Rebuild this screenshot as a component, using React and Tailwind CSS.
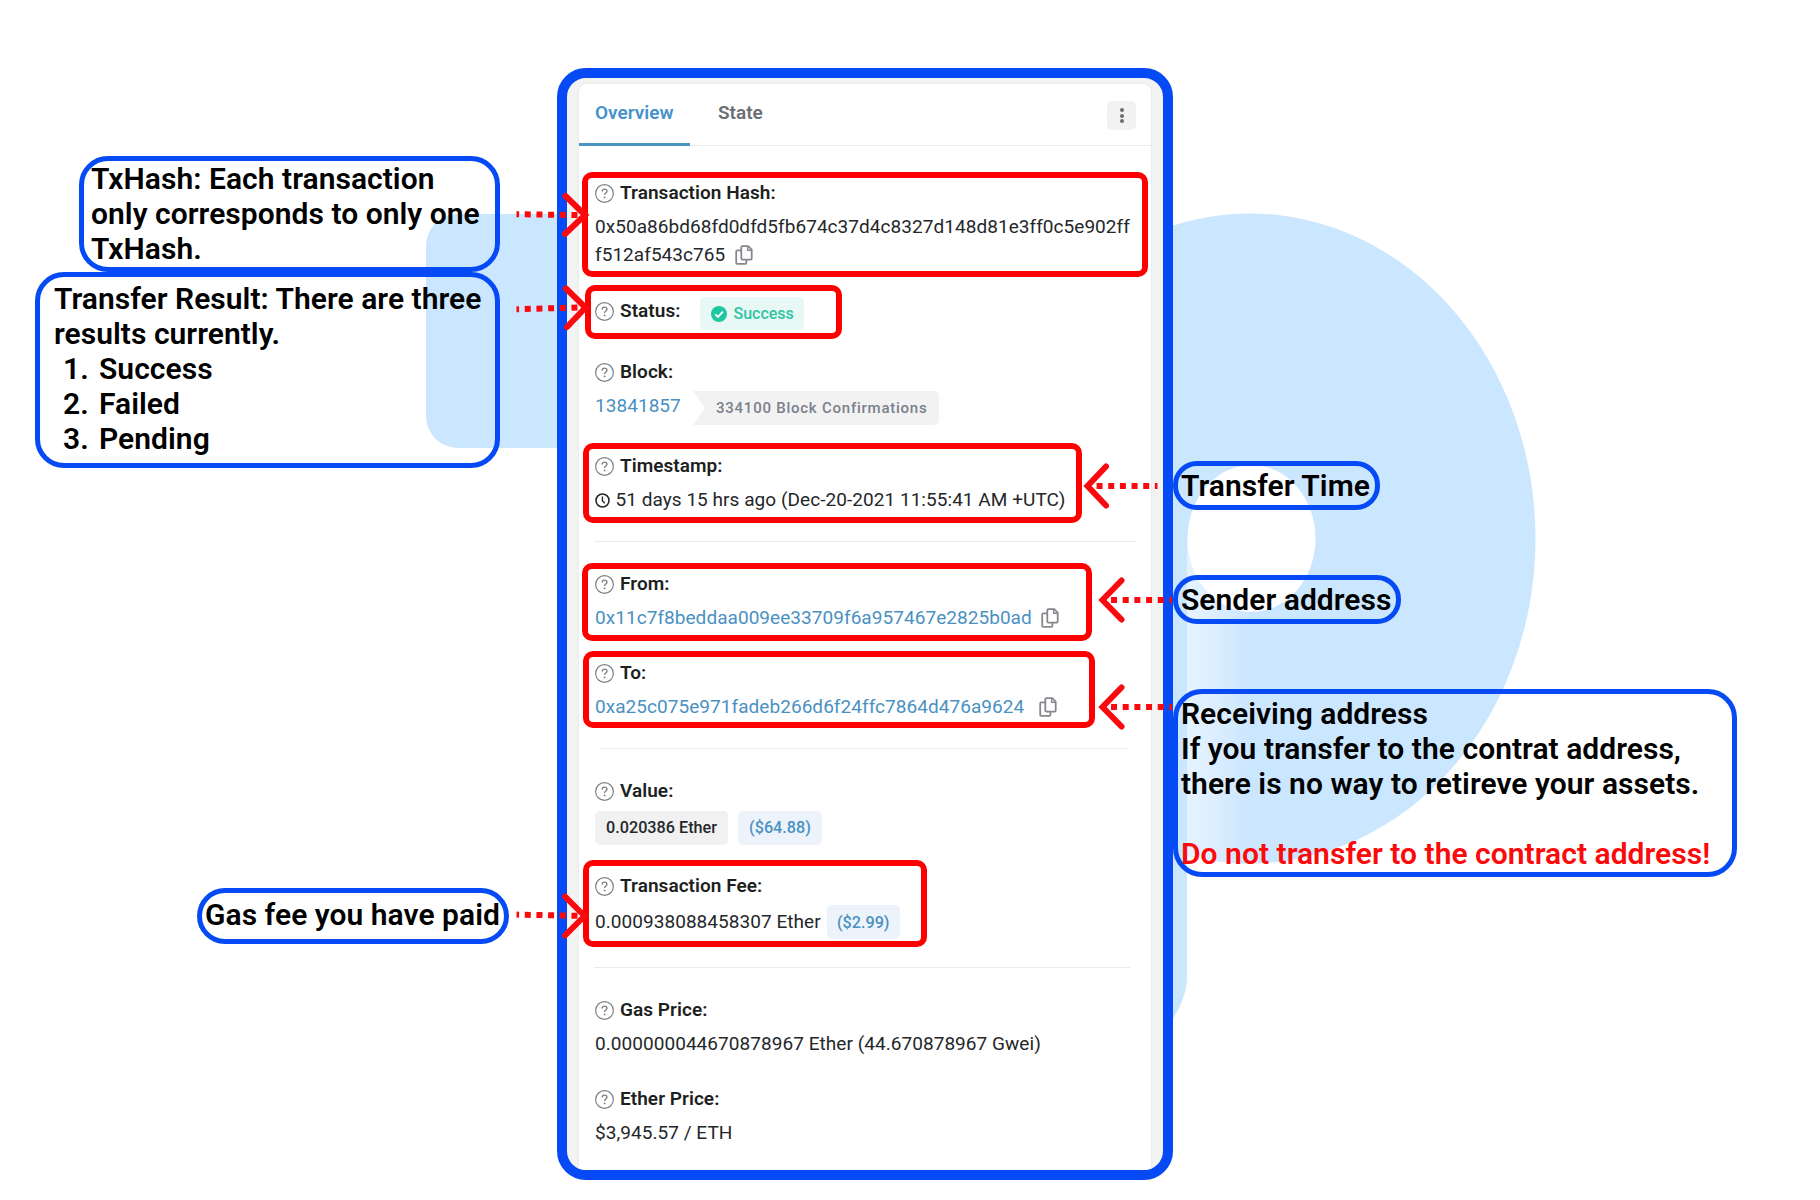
import React from "react";

const HelpIcon = () => (
  <svg viewBox="0 0 18 18" className="h-[19px] w-[19px] shrink-0" fill="none" stroke="#7c7f83">
    <circle cx="9" cy="9" r="8.4" strokeWidth="1.1" />
    <path d="M6.7 7.1c0-1.4 1-2.2 2.3-2.2s2.3.8 2.3 2c0 1.7-2.2 1.7-2.2 3.5" strokeWidth="1.3" />
    <circle cx="9.1" cy="12.7" r="0.9" fill="#7c7f83" stroke="none" />
  </svg>
);

const CopyIcon = ({ className = "" }) => (
  <svg
    viewBox="0 0 18 20"
    className={"h-5 w-[18px] shrink-0 " + className}
    fill="none"
    stroke="#85888c"
    strokeWidth="1.8"
    strokeLinejoin="round"
  >
    <path d="M6.3 2.2a1 1 0 0 1 1-1h6l3.4 3.4v9a1 1 0 0 1-1 1H7.3a1 1 0 0 1-1-1z" />
    <path d="M12.6 1.4v3.8h3.9" strokeWidth="1.4" />
    <path d="M6 5.4H2.2a1 1 0 0 0-1 1v11.4a1 1 0 0 0 1 1h8.2a1 1 0 0 0 1-1v-3" />
  </svg>
);

const ClockIcon = () => (
  <svg viewBox="0 0 15 15" className="h-[15px] w-[15px] shrink-0" fill="none" stroke="#26282b">
    <circle cx="7.5" cy="7.5" r="6.5" strokeWidth="1.6" />
    <path d="M7.4 3.6v4.2l2.3 2.4" strokeWidth="1.4" />
  </svg>
);

const CheckIcon = () => (
  <svg viewBox="0 0 16 16" className="h-4 w-4 shrink-0">
    <circle cx="8" cy="8" r="8" fill="#1fc6a2" />
    <path d="M4.3 8.3l2.7 2.7 4.9-5.3" fill="none" stroke="#fff" strokeWidth="1.9" />
  </svg>
);

function Label({ children, className = "" }) {
  return (
    <div className={"flex h-6 items-center " + className}>
      <HelpIcon />
      <span className="ml-[6px] text-[19px] font-semibold leading-6 tracking-[0.05px] text-[#1d1f21]">{children}</span>
    </div>
  );
}

function Value({ children, className = "" }) {
  return (
    <div className={"flex h-7 items-center text-[19px] leading-7 tracking-[0.05px] " + className}>{children}</div>
  );
}

const Divider = ({ className = "" }) => <div className={"h-px bg-[#ebebec] " + className} />;

const RedBox = ({ className }) => (
  <div className={"pointer-events-none absolute rounded-[10px] border-[6px] border-[#ff0000] " + className} />
);

const Callout = ({ className, children }) => (
  <div
    className={
      "absolute whitespace-nowrap border-[5px] border-[#054af4] text-[30px] font-semibold leading-[35px] tracking-[0.04px] text-black " +
      className
    }
  >
    {children}
  </div>
);

const arrows = [
  { shaft: "M516.5 214.2L583 215.2", head: "M565.5 196L585 215L565 234" },
  { shaft: "M516.5 309.2L583 307.4", head: "M566 288.5L585.5 307.5L567 327" },
  { shaft: "M516.5 914.6L583 915.9", head: "M565 896.5L584.5 916L565 935.5" },
  { shaft: "M1157.5 486L1092 486", head: "M1106 466.5L1087.5 486L1106 505.5" },
  { shaft: "M1172 600L1107 600", head: "M1121.5 580.5L1102.5 600L1121.5 619.5" },
  { shaft: "M1172 707L1107 707", head: "M1121.5 687.5L1102.5 707L1121.5 726.5" },
];

function Backdrop() {
  return (
    <svg className="absolute inset-0" width="1820" height="1200" viewBox="0 0 1820 1200">
      <defs>
        <linearGradient id="fold" x1="1187" x2="1250" y1="0" y2="0" gradientUnits="userSpaceOnUse">
          <stop offset="0" stopColor="#e6f3ff" />
          <stop offset="0.45" stopColor="#dceeff" />
          <stop offset="1" stopColor="#cbe6ff" />
        </linearGradient>
        <clipPath id="bowl">
          <ellipse cx="1250" cy="538.5" rx="285.5" ry="325" />
        </clipPath>
      </defs>
      <rect x="426" y="214" width="400" height="234" rx="32" fill="#cbe6ff" />
      <path d="M1000 538H1187V980Q1185 1005 1165 1030H1000Z" fill="#cbe6ff" />
      <ellipse cx="1250" cy="538.5" rx="285.5" ry="325" fill="#cbe6ff" />
      <rect x="1187" y="538" width="63" height="330" fill="url(#fold)" clipPath="url(#bowl)" />
      <ellipse cx="1251.5" cy="538.5" rx="64" ry="73.5" fill="#fff" />
    </svg>
  );
}

export default function App() {
  return (
    <div className="relative h-[1200px] w-[1820px] overflow-hidden bg-white font-['Roboto',sans-serif]">
      <Backdrop />

      <div className="relative flex justify-start pl-[557px] pt-[68px]">
        <main className="h-[1112px] w-[616px] overflow-hidden rounded-[29px] border-[10px] border-[#054af4] bg-[#f3f3f3] px-3 pt-[6px]">
          <section className="h-[1090px] rounded-t-lg bg-white shadow-[0_0_2px_1px_#e9eaeb]">
            <header className="flex h-[62px] items-stretch border-b border-[#e9eaec] text-[19px] font-semibold">
              <div className="-mb-px w-[111px] border-b-[3px] border-[#4a92c4] pl-4 leading-[58px] text-[#4592cc]">
                Overview
              </div>
              <div className="ml-7 leading-[58px] text-[#6b6e72]">State</div>
              <button className="ml-auto mr-[15px] mt-[17px] flex h-[29px] w-[29px] flex-col items-center justify-center gap-[1.5px] rounded-[5px] bg-[#f2f2f3]">
                <i className="h-[4px] w-[4px] rounded-full bg-[#6b6c75]" />
                <i className="h-[4px] w-[4px] rounded-full bg-[#6b6c75]" />
                <i className="h-[4px] w-[4px] rounded-full bg-[#6b6c75]" />
              </button>
            </header>

            <div className="flex flex-col pl-[16px] text-[#24272a]">
              <Label className="mt-[35px]">Transaction Hash:</Label>
              <Value className="mt-[8px]">0x50a86bd68fd0dfd5fb674c37d4c8327d148d81e3ff0c5e902ff</Value>
              <Value>
                f512af543c765
                <CopyIcon className="ml-[10px]" />
              </Value>

              <div className="mt-[28px] flex h-[33px] items-center">
                <Label className="-mt-[5px]">Status:</Label>
                <div className="ml-5 flex h-[33px] items-center gap-[6px] rounded-[5px] bg-[#e8f8f4] pl-[11px] pr-[10px] text-base font-medium text-[#2fc3a4]">
                  <CheckIcon />
                  Success
                </div>
              </div>

              <Label className="mt-[30px]">Block:</Label>
              <div className="mt-[7px] flex h-[34px] items-center">
                <Value className="-mt-[5px] w-[98px] text-[#4a91c2]">13841857</Value>
                <div className="flex h-[34px] w-[246px] items-center rounded-r-[5px] bg-[#f2f2f3] pl-[23px] text-[15px] font-medium tracking-[0.76px] text-[#7b808c] [clip-path:polygon(0_0,100%_0,100%_100%,0_100%,12px_50%)]">
                  334100 Block Confirmations
                </div>
              </div>

              <Label className="mt-[29px]">Timestamp:</Label>
              <Value className="mt-[8px]">
                <ClockIcon />
                <span className="ml-[5.5px]">51 days 15 hrs ago (Dec-20-2021 11:55:41 AM +UTC)</span>
              </Value>

              <Divider className="-ml-px mt-[27px] w-[543px]" />

              <Label className="mt-[30px]">From:</Label>
              <Value className="mt-[8px] text-[#4a91c2]">
                0x11c7f8beddaa009ee33709f6a957467e2825b0ad
                <CopyIcon className="ml-[9px]" />
              </Value>

              <Label className="mt-[29px]">To:</Label>
              <Value className="mt-[8px] text-[#4a91c2]">
                0xa25c075e971fadeb266d6f24ffc7864d476a9624
                <CopyIcon className="ml-[15px]" />
              </Value>

              <Divider className="ml-[5px] mt-[27px] w-[529px]" />

              <Label className="mt-[30px]">Value:</Label>
              <div className="mt-[8px] flex h-[34px] gap-[10px] text-[16.2px] font-medium leading-[34px]">
                <span className="w-[133px] rounded-[5px] bg-[#f1f1f2] text-center">0.020386 Ether</span>
                <span className="w-[84px] rounded-[5px] bg-[#edf3fa] text-center text-[#4a91c2]">($64.88)</span>
              </div>

              <Label className="mt-[29px]">Transaction Fee:</Label>
              <div className="mt-[7px] flex h-[34px] items-center">
                <Value>0.000938088458307 Ether</Value>
                <span className="ml-[6px] h-[34px] w-[73px] rounded-[5px] bg-[#edf3fa] text-center text-[16.2px] font-medium leading-[36px] text-[#4a91c2]">
                  ($2.99)
                </span>
              </div>

              <Divider className="-ml-px mt-[28px] w-[536px]" />

              <Label className="mt-[30px]">Gas Price:</Label>
              <Value className="mt-[8px]">0.000000044670878967 Ether (44.670878967 Gwei)</Value>

              <Label className="mt-[29px]">Ether Price:</Label>
              <Value className="mt-[8px]">$3,945.57 / ETH</Value>
            </div>
          </section>
        </main>
      </div>

      <RedBox className="left-[582px] top-[172px] h-[105px] w-[566px]" />
      <RedBox className="left-[585px] top-[285px] h-[54px] w-[257px]" />
      <RedBox className="left-[583px] top-[443px] h-[80px] w-[499px]" />
      <RedBox className="left-[582px] top-[563px] h-[78px] w-[510px]" />
      <RedBox className="left-[583px] top-[651px] h-[77px] w-[512px]" />
      <RedBox className="left-[583px] top-[860px] h-[87px] w-[344px]" />

      <Callout className="left-[79px] top-[156px] h-[116px] w-[421px] rounded-[29px] pl-[7px]">
        <div>TxHash: Each transaction</div>
        <div>only corresponds to only one</div>
        <div>TxHash.</div>
      </Callout>
      <Callout className="left-[35px] top-[272px] h-[196px] w-[465px] rounded-[29px] pl-[14px]">
        <div className="mt-[4px]">Transfer Result: There are three</div>
        <div>results currently.</div>
        <ol>
          {["Success", "Failed", "Pending"].map((name, i) => (
            <li key={name} className="flex">
              <span className="w-[45px] pl-[9px]">{i + 1}.</span>
              <span>{name}</span>
            </li>
          ))}
        </ol>
      </Callout>
      <Callout className="left-[197px] top-[888px] h-[56px] w-[312px] rounded-[28px] pl-[3px] pt-[4px]">
        Gas fee you have paid
      </Callout>
      <Callout className="left-[1173px] top-[461px] h-[49px] w-[207px] rounded-[24px] pl-[3px] pt-[2px]">
        Transfer Time
      </Callout>
      <Callout className="left-[1173px] top-[575px] h-[49px] w-[228px] rounded-[24px] pl-[3px] pt-[2px]">
        Sender address
      </Callout>
      <Callout className="left-[1173px] top-[689px] h-[188px] w-[564px] rounded-[29px] pl-[3px] pt-[2px]">
        <div>Receiving address</div>
        <div>If you transfer to the contrat address,</div>
        <div>there is no way to retireve your assets.</div>
        <div className="mt-[35px] text-[#fa0a0a]">Do not transfer to the contract address!</div>
      </Callout>

      <svg className="pointer-events-none absolute inset-0" width="1820" height="1200" viewBox="0 0 1820 1200" fill="none" stroke="#fa0a0f">
        {arrows.map((a) => (
          <g key={a.shaft}>
            <path d={a.shaft} strokeWidth="6" strokeDasharray="6 5.67" strokeDashoffset="3.4" />
            <path d={a.head} strokeWidth="6" strokeLinecap="round" strokeLinejoin="miter" />
          </g>
        ))}
      </svg>
    </div>
  );
}
